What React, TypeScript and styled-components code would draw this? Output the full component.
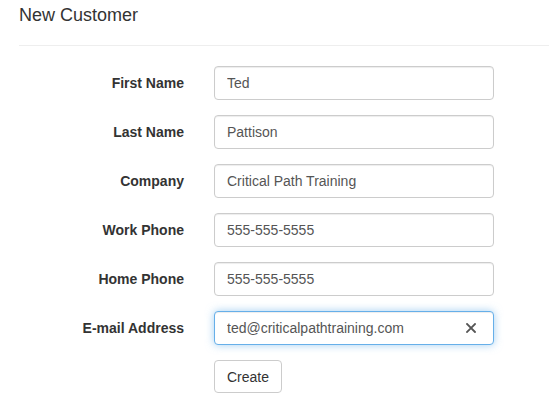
import React from "react";
import styled, { createGlobalStyle } from "styled-components";

const Global = createGlobalStyle`
  * { box-sizing: border-box; }
  body {
    margin: 0;
    background: #fff;
    font-family: "Liberation Sans", Arial, sans-serif;
    font-size: 14px;
    line-height: 1.42857;
    color: #333;
  }
`;

const Page = styled.div`
  padding-left: 19px;
`;

const Title = styled.h4`
  margin: 0;
  padding-top: 5px;
  font-size: 18px;
  font-weight: 400;
  line-height: 20px;
  color: #333;
`;

const Rule = styled.hr`
  margin: 20px 0 20px;
  border: 0;
  border-top: 1px solid #eee;
  height: 0;
`;

const Form = styled.form`
  display: grid;
  grid-template-columns: 165px 280px;
  column-gap: 30px;
  row-gap: 15px;
  align-items: start;
`;

const Label = styled.label`
  text-align: right;
  font-weight: 700;
  padding-top: 7px;
  line-height: 20px;
  white-space: nowrap;
`;

const Field = styled.div`
  position: relative;
`;

const Input = styled.input<{ $focused?: boolean }>`
  display: block;
  width: 280px;
  height: 34px;
  padding: 6px 12px;
  font-family: inherit;
  font-size: 14px;
  line-height: 20px;
  color: #555;
  background: #fff;
  border: 1px solid ${(p) => (p.$focused ? "#66afe9" : "#ccc")};
  border-radius: 4px;
  outline: none;
  box-shadow: ${(p) =>
    p.$focused
      ? "inset 0 1px 1px rgba(0,0,0,.075), 0 0 8px rgba(102,175,233,.6)"
      : "inset 0 1px 1px rgba(0,0,0,.075)"};
`;

const Clear = styled.span`
  position: absolute;
  right: 18px;
  top: 12px;
  width: 10px;
  height: 10px;
  display: block;
  line-height: 0;
`;

const Button = styled.button`
  grid-column: 2;
  justify-self: start;
  height: 33px;
  padding: 6px 12px;
  font-family: inherit;
  font-size: 14px;
  line-height: 20px;
  color: #333;
  background: #fff;
  border: 1px solid #ccc;
  border-radius: 4px;
`;

const fields = [
  { label: "First Name", value: "Ted" },
  { label: "Last Name", value: "Pattison" },
  { label: "Company", value: "Critical Path Training" },
  { label: "Work Phone", value: "555-555-5555" },
  { label: "Home Phone", value: "555-555-5555" },
  { label: "E-mail Address", value: "ted@criticalpathtraining.com", focused: true },
];

export default function App() {
  return (
    <>
      <Global />
      <Page>
        <Title>New Customer</Title>
        <Rule />
        <Form onSubmit={(e) => e.preventDefault()}>
          {fields.map((f) => (
            <React.Fragment key={f.label}>
              <Label>{f.label}</Label>
              <Field>
                <Input $focused={f.focused} defaultValue={f.value} readOnly />
                {f.focused && (
                  <Clear>
                    <svg width="10" height="10" viewBox="0 0 10 10">
                      <path d="M1 1L9 9M9 1L1 9" stroke="#555" strokeWidth="1.8" strokeLinecap="square" />
                    </svg>
                  </Clear>
                )}
              </Field>
            </React.Fragment>
          ))}
          <Button type="submit">Create</Button>
        </Form>
      </Page>
    </>
  );
}
